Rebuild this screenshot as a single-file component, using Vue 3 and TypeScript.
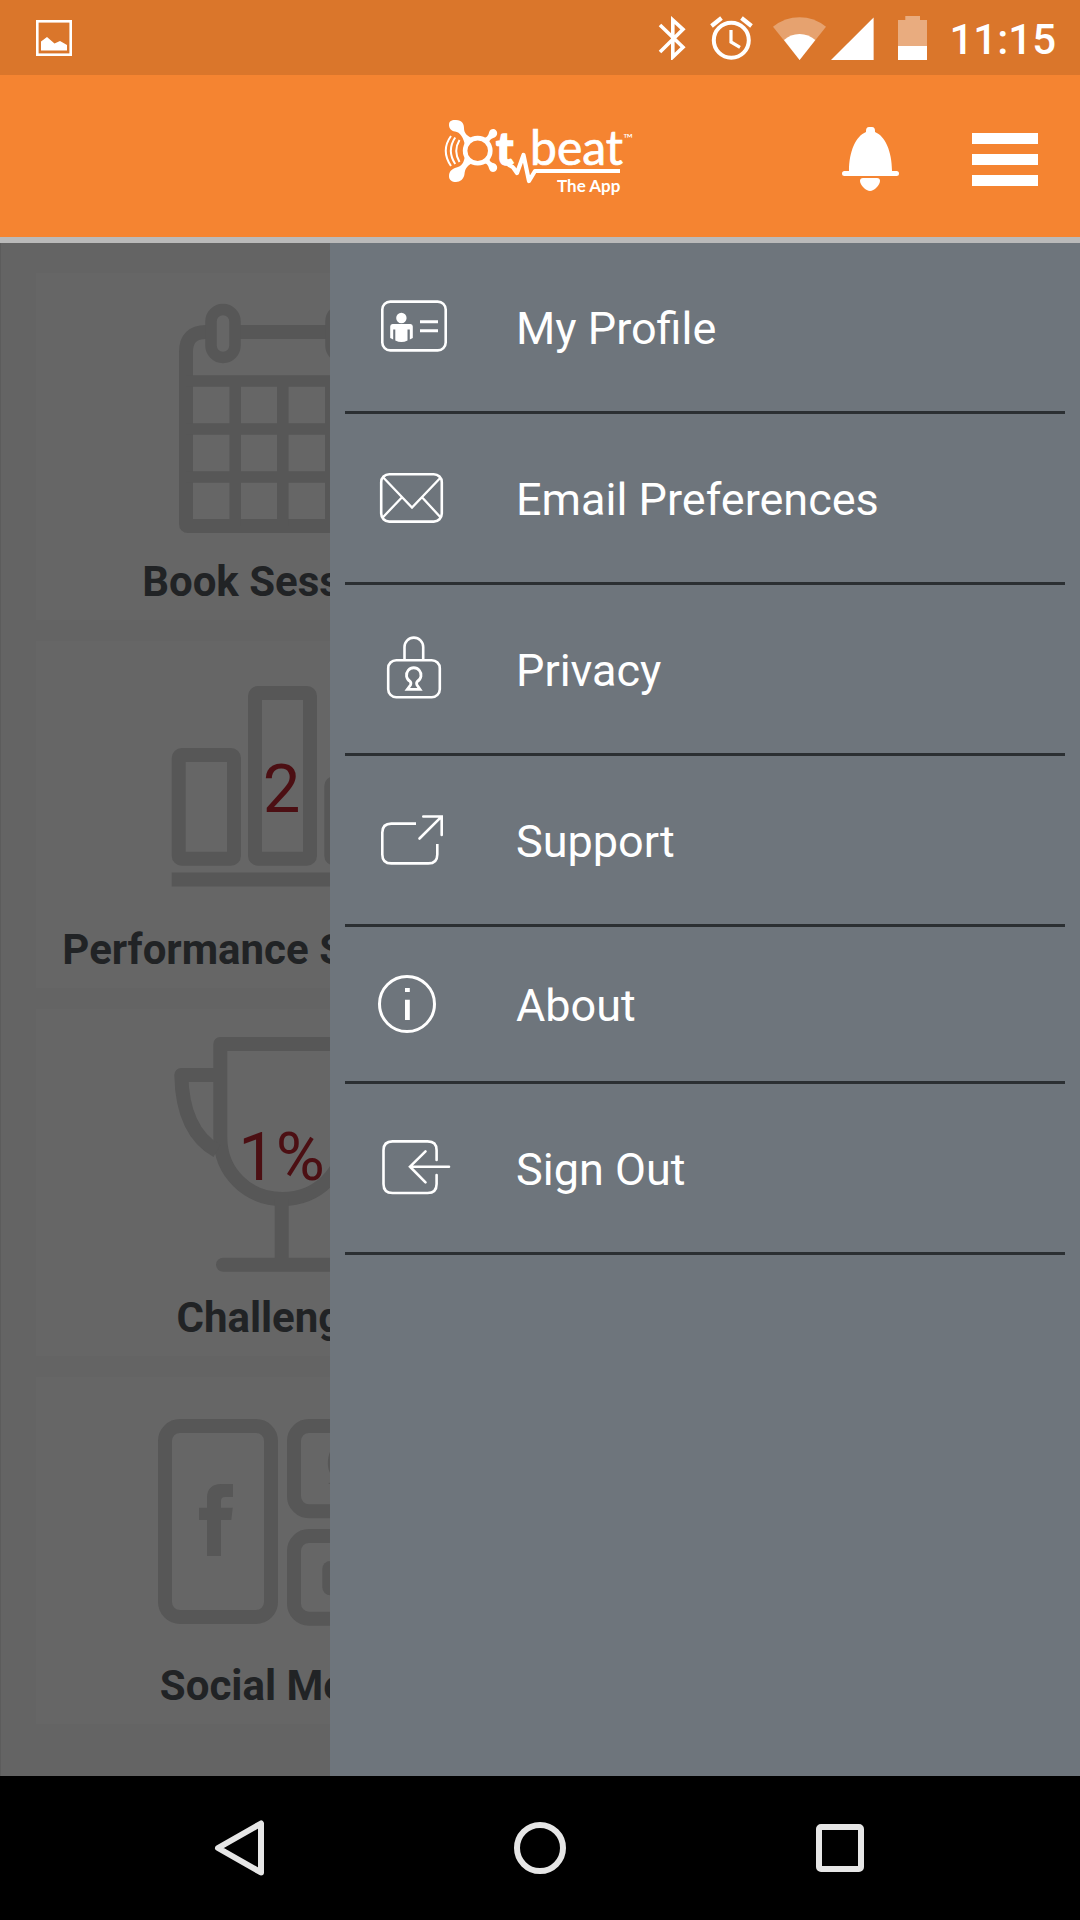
<script setup lang="ts">
type IconName = 'profile' | 'email' | 'privacy' | 'support' | 'about' | 'signout'
type TileName = 'calendar' | 'bars' | 'trophy' | 'social'

interface MenuItem {
  icon: IconName
  label: string
  compact?: boolean
}

interface Tile {
  icon: TileName
  label: string
  value?: string
}

const menu: MenuItem[] = [
  { icon: 'profile', label: 'My Profile' },
  { icon: 'email', label: 'Email Preferences' },
  { icon: 'privacy', label: 'Privacy' },
  { icon: 'support', label: 'Support' },
  { icon: 'about', label: 'About', compact: true },
  { icon: 'signout', label: 'Sign Out' },
]

const tiles: Tile[] = [
  { icon: 'calendar', label: 'Book Sessions' },
  { icon: 'bars', label: 'Performance Summary', value: '2' },
  { icon: 'trophy', label: 'Challenges', value: '1%' },
  { icon: 'social', label: 'Social Media' },
]
</script>

<template>
  <div class="screen">
    <div class="status">
      <svg class="status-photo" width="36" height="36" viewBox="0 0 36 36" aria-hidden="true">
        <rect x="1.3" y="1.3" width="33.4" height="33.4" fill="none" stroke="#fff" stroke-width="2.6" />
        <path d="M5 21.5 L11 17 L18.5 23.5 L24 21 L31 25 V30.5 H5Z" fill="#fff" />
      </svg>
      <div class="status-right">
        <svg width="28" height="44" viewBox="0 0 28 44" aria-hidden="true">
          <path d="M2 9 L25 31.3 L14.8 41 V4 L25 13.3 L2 36" fill="none" stroke="#fff" stroke-width="3.6" />
        </svg>
        <svg class="gap-wide" width="43" height="44" viewBox="0 0 43 44" fill="none" stroke="#fff" aria-hidden="true">
          <circle cx="21.3" cy="24.3" r="17.5" stroke-width="4" />
          <path d="M21 14 V26 L30 31.3" stroke-width="3.2" />
          <path d="M1.5 10 L11.5 2 M31.5 2 L41.5 10" stroke-width="4.2" />
        </svg>
        <svg class="gap-mid" width="53" height="44" viewBox="0 0 53 44" fill="#fff" aria-hidden="true">
          <path d="M26.6 44 L0 10.7 Q12 1.3 26.6 1.3 Q41 1.3 53 10.7Z" opacity="0.32" />
          <path d="M26.6 44 L11 24 Q17.5 18 26.6 18 Q35.5 18 42.3 24Z" />
        </svg>
        <svg class="gap-small" width="43" height="44" viewBox="0 0 43 44" fill="#fff" aria-hidden="true">
          <path d="M0 44 L42.6 1.5 V44Z" />
        </svg>
        <svg class="gap-wide" width="29" height="44" viewBox="0 0 29 44" fill="#fff" aria-hidden="true">
          <path d="M0 4 H7.3 V0 H22 V4 H29 V30 H0Z" opacity="0.4" />
          <rect y="30" width="29" height="14" />
        </svg>
        <span class="clock">11:15</span>
      </div>
    </div>

    <header class="header">
      <svg class="logo" width="200" height="82" viewBox="0 0 200 82" role="img" aria-label="otbeat The App">
        <g fill="none" stroke="#fff" stroke-width="2">
          <path d="M11 21 Q0.5 35.5 11 51" />
          <path d="M15.2 22.5 Q6.5 35.5 15.2 49" />
          <path d="M19.5 25 Q13 35.7 19.5 47" />
        </g>
        <circle cx="37.7" cy="35.7" r="12.6" fill="none" stroke="#fff" stroke-width="4.6" />
        <g fill="#fff">
          <path d="M9 10 C9 5 13 5 16 5 C22 5 24 9 24 13 C24 18 27 21 32 23 L25 31 C24 23 20 17 15 16.500 C11 16 9 13 9 10Z" />
          <path d="M9 61 C9 55 14 53 18 52 C23 50 24 46 25 41 L32 48 C27 51 25 54 24.500 59 C24 64 20 67 16 67 C12 67 9 65 9 61Z" />
          <path d="M43 23 C47 23 48.500 20 49 17.500 C50 14 53 13.500 55 14.500 C58 16 58 21 54.500 22.500 C51 23.500 49 25 49 29Z" />
          <path d="M43 48 C47 48 48.500 51 49 53.500 C50 57 53 57.500 55 56.500 C58 55 58 50 54.500 48.500 C51 47.500 49 46 49 42Z" />
        </g>
        <path d="M68 49 C70 51.500 72 50.500 73.500 53 L77 58 L83.500 40 L89 66 L95 56 H180" fill="none" stroke="#fff" stroke-width="4.2" stroke-linejoin="round" />
        <text class="mark-t" x="56" y="50">t</text>
        <text class="mark-beat" x="90" y="50">beat</text>
        <text class="mark-tm" x="183" y="28">™</text>
        <text class="mark-app" x="117" y="77">The App</text>
      </svg>
      <div class="actions">
        <button type="button" aria-label="Notifications">
          <svg width="58" height="66" viewBox="0 0 58 66" fill="#fff" aria-hidden="true">
            <path d="M24 5 V4 Q24 0 27 0 H30 Q33 0 33 4 V5 C43 9 50 24 50 44 H54.500 A2.500 2.500 0 0 1 54.500 49 H2.500 A2.500 2.500 0 0 1 2.500 44 H7 C7 24 14 9 24 5Z" />
            <path d="M21 51 H35 Q38 51 38 54 C38 58 32 64 28 64 C24 64 18 58 18 54 Q18 51 21 51Z" />
          </svg>
        </button>
        <button type="button" class="burger" aria-label="Menu" aria-expanded="true">
          <span></span><span></span><span></span>
        </button>
      </div>
    </header>

    <main class="content">
      <section class="tiles">
        <article v-for="tile in tiles" :key="tile.icon" class="tile">
          <svg class="tile-icon" width="261" height="245" viewBox="0 0 261 245" fill="none" aria-hidden="true">
            <template v-if="tile.icon === 'calendar'">
              <path d="M35 231 V59 Q35 39 55 39 H208.800 Q228.800 39 228.800 59 V231 Q228.800 233 226.800 233 H37 Q35 233 35 231Z" stroke-width="14" />
              <path d="M84.200 88 V233 M131.800 88 V233 M179.800 88 V233 M35 88 H229 M35 136 H229 M35 184 H229" stroke-width="11.500" />
              <rect class="hole" x="60" y="16.500" width="24" height="48" rx="12" stroke-width="11.500" />
              <rect class="hole" x="180" y="16.500" width="24" height="48" rx="12" stroke-width="11.500" />
            </template>
            <g v-else-if="tile.icon === 'bars'" stroke-width="14">
              <rect x="27.700" y="94" width="55.300" height="103.700" rx="3" />
              <rect x="104" y="32" width="55" height="165.700" rx="3" />
              <rect x="180.300" y="122" width="55" height="75.700" rx="3" />
              <path d="M20.700 218.400 H242.500" />
            </g>
            <g v-else-if="tile.icon === 'trophy'" stroke-width="14">
              <path d="M69.300 15 H193.700 V108 C193.700 144 166 170 131.500 170 C97 170 69.300 144 69.300 108Z" stroke-linejoin="round" />
              <path d="M69 46 H30.300 C31 84 43 109 66 122 M194 46 H232.700 C232 84 220 109 197 122" stroke-linejoin="round" />
              <path d="M130.700 170 V236" />
              <path d="M72 235.800 H190" stroke-linecap="round" />
            </g>
            <g v-else stroke-width="14">
              <rect x="14" y="29" width="106" height="191" rx="15" />
              <rect x="143" y="29" width="105" height="85.300" rx="15" />
              <rect x="143" y="139" width="105" height="82.700" rx="15" />
              <path class="solid" d="M56 159 V123 H48 V110.700 H56 V101 C56 92 61 87 70 87 H82 V100 H74 Q70 100 70 104 V110.700 H81.700 L80.300 123 H70 V159Z" />
              <path class="solid" d="M179 55 C183 61 189 64 195 64 C194 57 198 52 204 52 C207 52 209 53 211 55 L216 53 L213 58 L217 57 L213 61 C213 78 200 89 186 89 C182 89 179 87 177 86 C181 86 184 85 187 83 C183 82 181 80 180 77 C176 73 176 61 179 55Z" />
              <rect class="solid" x="171.300" y="164" width="49" height="34.300" rx="8" />
            </g>
          </svg>
          <span v-if="tile.value" class="tile-value">{{ tile.value }}</span>
          <h2 class="tile-label">{{ tile.label }}</h2>
        </article>
      </section>

      <nav class="drawer" aria-label="Main menu">
        <a v-for="item in menu" :key="item.icon" href="#" class="row" :class="{ compact: item.compact }">
          <svg class="row-icon" width="79" height="79" viewBox="0 0 79 79" fill="none" stroke="#fff" stroke-width="2.600" aria-hidden="true">
            <template v-if="item.icon === 'profile'">
              <rect x="8.300" y="12.600" width="63.400" height="48.800" rx="8" />
              <g fill="#fff" stroke="none">
                <circle cx="27.400" cy="29" r="5.200" />
                <path d="M18.500 35 H36.500 Q38.800 35 38.800 37.500 V49 L35.800 50.500 V40.500 H33.500 V51.500 Q27.500 54.500 21.300 51.500 V40.500 H19.200 V50.500 L16.200 49 V37.500 Q16.200 35 18.500 35Z" />
              </g>
              <path d="M46 32.700 H64 M46 41.700 H64" stroke-width="3" />
            </template>
            <template v-else-if="item.icon === 'email'">
              <rect x="7.200" y="14.200" width="60.600" height="47.400" rx="8" />
              <path d="M9.300 17.500 L38 47.500 L66.700 17.500 M8.700 57.500 L27.300 38 M66.700 57.500 L48.700 38" stroke-width="2.300" />
            </template>
            <template v-else-if="item.icon === 'privacy'">
              <rect x="14.200" y="29.200" width="51.600" height="37" rx="8" />
              <path d="M30.500 29 V16 A9.300 9.300 0 0 1 49.200 16 V29" />
              <path d="M36 50.300 A7.300 7.300 0 1 1 43.500 50.300 Q42 52 43 54 L46 58.300 H33.300 L36.500 54 Q37.500 52 36 50.300Z" stroke-width="2.800" />
            </template>
            <template v-else-if="item.icon === 'support'">
              <path d="M42 21.600 H17.300 Q8.300 21.600 8.300 30.600 V52.400 Q8.300 61.400 17.300 61.400 H54.300 Q63.300 61.400 63.300 52.400 V42" />
              <path d="M45.500 36.500 L67.500 14.700 M49.300 14.500 H67.700 V33" stroke-linecap="round" />
            </template>
            <template v-else-if="item.icon === 'about'">
              <circle cx="33" cy="38" r="27.500" stroke-width="3" />
              <path d="M33.400 22 V26 M33.400 33.700 V54" stroke-width="4.800" />
            </template>
            <template v-else>
              <path d="M62.600 30 V20.300 Q62.600 11.400 53.600 11.400 H18.500 Q9.500 11.400 9.500 20.300 V54 Q9.500 63 18.500 63 H53.600 Q62.600 63 62.600 54 V45" stroke-linecap="round" />
              <path d="M75 36.700 H36 M51.500 21.300 L36 36.700 L51.500 52.300" stroke-linecap="round" />
            </template>
          </svg>
          <span>{{ item.label }}</span>
        </a>
      </nav>
    </main>

    <footer class="navbar">
      <button type="button" aria-label="Back">
        <svg width="56" height="56" viewBox="0 0 56 56" aria-hidden="true">
          <path d="M49 3.500 V52.500 L6 28Z" />
        </svg>
      </button>
      <button type="button" aria-label="Home">
        <svg width="56" height="56" viewBox="0 0 56 56" aria-hidden="true">
          <circle cx="28" cy="28" r="23" />
        </svg>
      </button>
      <button type="button" aria-label="Recent apps">
        <svg width="56" height="56" viewBox="0 0 56 56" aria-hidden="true">
          <rect x="7" y="7" width="42" height="42" rx="2" />
        </svg>
      </button>
    </footer>
  </div>
</template>

<style>
body {
  margin: 0;
  background: #000;
}
</style>

<style scoped>
.screen {
  display: flex;
  flex-direction: column;
  min-height: 100vh;
  font-family: Roboto, 'Liberation Sans', sans-serif;
  color: #fff;
}

svg {
  display: block;
  flex: none;
}

button {
  padding: 0;
  border: 0;
  background: none;
  cursor: pointer;
}

.status {
  display: flex;
  align-items: center;
  justify-content: space-between;
  height: 75px;
  padding: 0 24px 0 36px;
  background: #da762b;
}

.status-right {
  display: flex;
  align-items: center;
}

.gap-wide {
  margin-left: 24px;
}

.gap-mid {
  margin-left: 20px;
}

.gap-small {
  margin-left: 5px;
}

.clock {
  margin-left: 22px;
  padding-top: 4px;
  font-size: 42px;
  line-height: 48px;
  font-weight: 500;
}

.header {
  display: grid;
  grid-template-columns: 1fr auto 1fr;
  align-items: center;
  height: 162px;
  border-bottom: 6px solid #bababa;
  background: #f58431;
}

.logo {
  grid-column: 2;
  fill: #fff;
}

.mark-t {
  font: 900 46px Lato, sans-serif;
  stroke: #fff;
  stroke-width: 1.5px;
}

.mark-beat {
  font: 400 48px Lato, sans-serif;
  stroke: #fff;
  stroke-width: 0.7px;
}

.mark-tm {
  font: 400 13px Lato, sans-serif;
}

.mark-app {
  font: 700 17px Lato, sans-serif;
}

.actions {
  display: flex;
  align-items: center;
  justify-content: flex-end;
  gap: 72px;
  padding: 7px 42px 0 0;
}

.burger {
  display: flex;
  flex-direction: column;
  gap: 10px;
  width: 66px;
}

.burger span {
  height: 11px;
  background: #fff;
}

.content {
  position: relative;
  flex: 1;
  overflow: hidden;
  border-left: 1px solid #5c5c5c;
  background: #646464;
}

.tiles {
  display: grid;
  grid-template-columns: 1fr 1fr;
  gap: 21px 26px;
  padding: 30px 36px 52px 35px;
}

.tile {
  position: relative;
  grid-column: 1;
  display: flex;
  flex-direction: column;
  align-items: center;
  height: 327px;
  padding-top: 20px;
  background: #666;
}

.tile-icon {
  stroke: #575757;
}

.hole {
  fill: #666;
}

.solid {
  fill: #575757;
  stroke: none;
}

.tile-value {
  position: absolute;
  top: 109px;
  left: 0;
  right: 0;
  text-align: center;
  font-size: 67px;
  line-height: 78px;
  color: #4c0f13;
}

.tile-label {
  margin: 19px 0 0;
  font-size: 42px;
  line-height: 49px;
  font-weight: 700;
  white-space: nowrap;
  color: #212325;
}

.drawer {
  position: absolute;
  inset: 0 0 0 329px;
  padding: 0 15px;
  background: #6e757c;
}

.row {
  display: flex;
  align-items: center;
  gap: 63px;
  box-sizing: border-box;
  height: 171px;
  padding: 3px 0 0 29px;
  border-bottom: 3px solid #2b2f32;
  font-size: 45px;
  line-height: 53px;
  color: #fff;
  text-decoration: none;
}

.compact {
  height: 157px;
}

.navbar {
  display: grid;
  grid-template-columns: repeat(3, 1fr);
  align-items: center;
  justify-items: center;
  height: 144px;
  padding: 0 90px;
  background: #000;
}

.navbar svg {
  fill: none;
  stroke: #e6e6e6;
  stroke-width: 6px;
  stroke-linejoin: round;
}
</style>
